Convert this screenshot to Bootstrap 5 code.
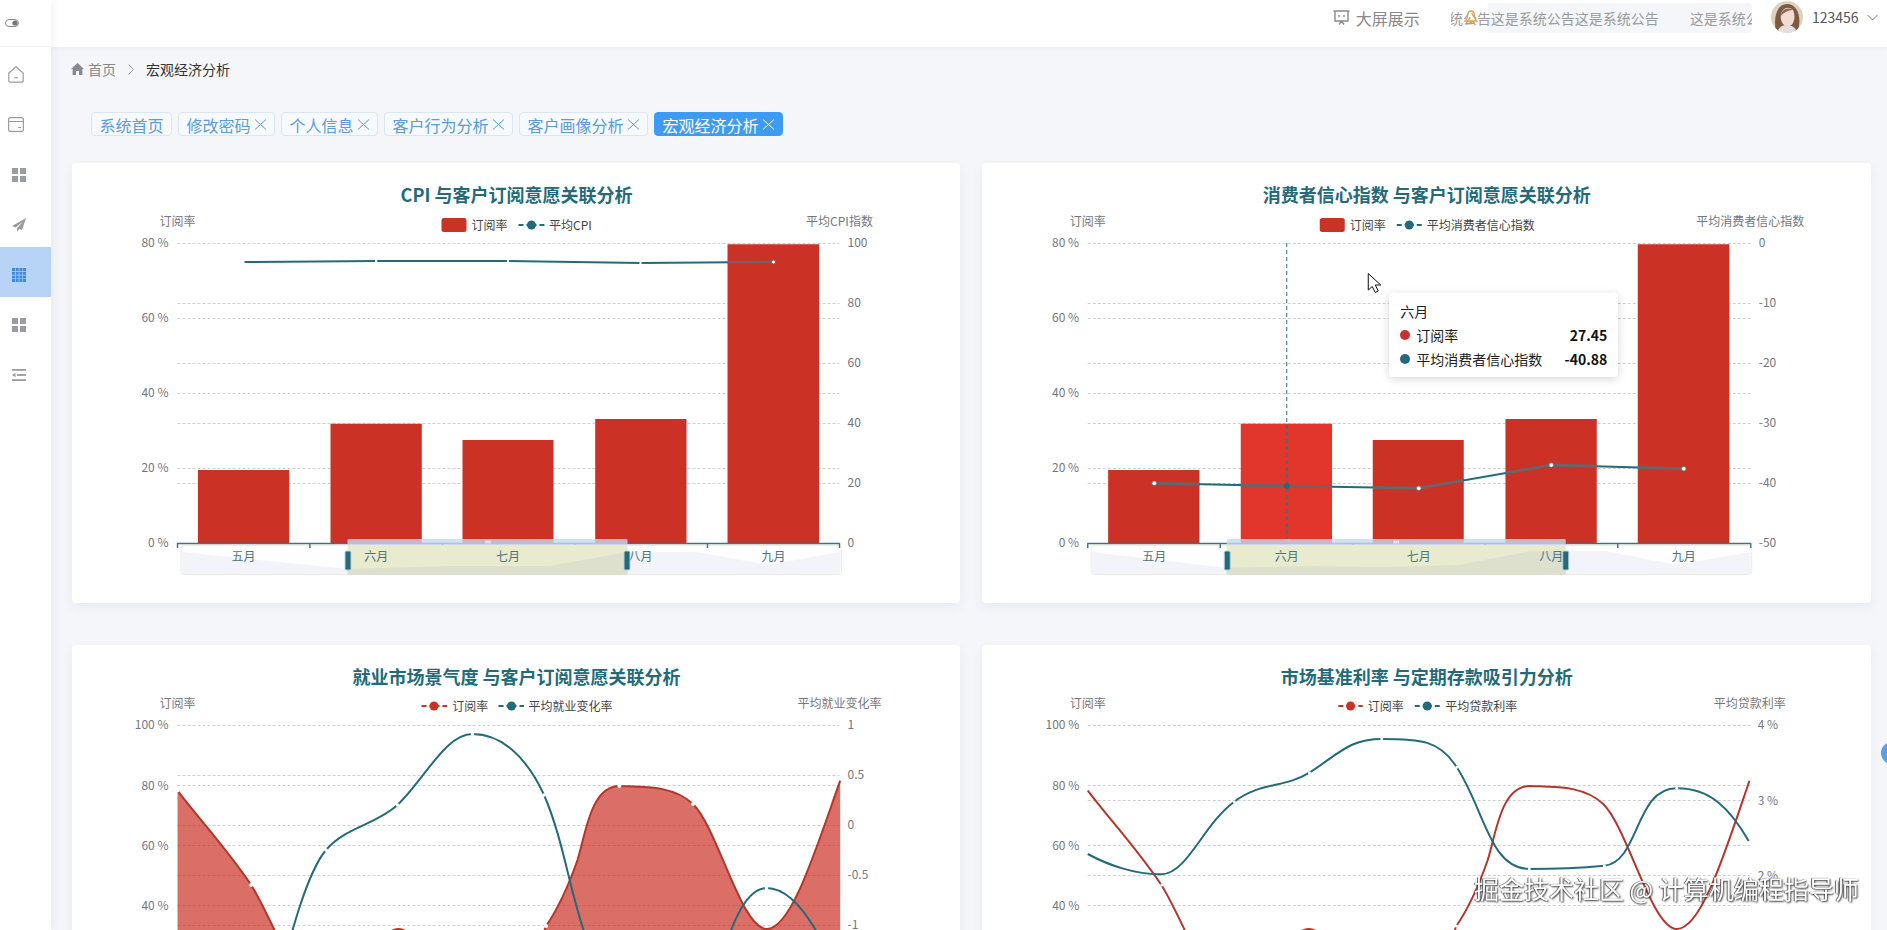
<!DOCTYPE html>
<html lang="zh-CN">
<head>
<meta charset="utf-8">
<title>宏观经济分析</title>
<link href="https://cdn.jsdelivr.net/npm/bootstrap@5.3.0/dist/css/bootstrap.min.css" rel="stylesheet">
<style>
html,body{height:930px;overflow:hidden}
body{background:#f4f6fa;font-family:"Noto Sans CJK SC","Noto Sans",sans-serif;font-size:14px;color:#333}
.shell{height:930px}
.side{width:51px;flex:none;background:#fff;box-shadow:2px 0 8px rgba(30,50,90,.06);z-index:2}
.side-top{height:47px;border-bottom:1px solid #f1f2f4;padding-left:5px}
.mi{height:50px;padding-left:12px;padding-top:5px;color:#9a9ca1}
.mi-wide{padding-left:8px}
.mi-on{background:#b7d3f5;color:#3d8be0}
.topbar{height:47px;background:#fff;box-shadow:0 1px 6px rgba(30,50,90,.05);padding-right:9.500px;color:#888}
.screen-link{font-size:16px;line-height:22px;color:#888;margin-right:31px;margin-top:-12px;gap:6px}
.notice{width:301px;height:30px;overflow:hidden;margin-top:-11px;margin-right:19px;white-space:nowrap;font-size:14px;line-height:30px;color:#9a9a9a;background:linear-gradient(90deg,transparent 37px,#f4f6fa 37px);border-radius:4px;text-indent:-2px}
.notice-gap{display:inline-block;width:31px}
.bell-char{position:relative;display:inline-block;text-indent:0}
.bell-char svg{position:absolute;left:1px;top:7px}
.who{font-size:14px;color:#555;line-height:20px;margin-top:-13px}
.who svg.face{border-radius:50%;margin-right:9px}
.crumbs{height:46px;padding-left:20px;padding-bottom:2px;color:#888;line-height:20px}
.crumbs b{font-weight:400;color:#333}
.crumb-sep{margin:0 12px}
.tabrow{margin-top:19px;padding-left:40px;gap:6px}
.tabx{height:24px;padding:1px 7.500px 0;font-size:16px;line-height:22px;color:#5a9be0;background:#f6f9fe;border:1px solid #dbe6f3;border-radius:4px;white-space:nowrap}
.tabx svg{margin-left:3px;flex:none}
.tabx-on{background:#3d9bf5;border-color:#3d9bf5;color:#fff}
.panels{display:grid;grid-template-columns:1fr 1fr;column-gap:22px;row-gap:42px;margin-top:27px;padding-left:20.500px;padding-right:16px}
.panel{height:440px;border:0;border-radius:4px;box-shadow:0 4px 12px rgba(30,50,90,.06)}
.panel svg.plot{display:block;width:100%;height:440px}
.plot text{font-family:"Noto Sans CJK SC","Noto Sans",sans-serif;font-size:12px;dominant-baseline:central}
.plot .ttl{font-size:18px;font-weight:700;fill:#236b7a;text-anchor:middle}
.plot .ax{fill:#75777f}
.plot .lg{fill:#444}
.plot .cat{fill:#4f7480;text-anchor:middle}
.gr{stroke:#cfcfcf;stroke-width:1;stroke-dasharray:3 2}
.tip{position:absolute;left:407px;top:130px;width:229px;height:84px;background:#fff;border-radius:4px;box-shadow:0 2px 10px rgba(0,0,0,.16);padding:6px 11px 0 11px;font-size:14px;line-height:24px;color:#222}
.tip-dot{width:10px;height:10px;border-radius:50%;margin-right:6px;flex:none}
.dot-red{background:#c8322a}
.dot-teal{background:#236b7a}
.tip b{margin-left:auto;font-weight:700;color:#111}
.float-dot{position:fixed;right:-16px;top:742px;width:22px;height:22px;border-radius:50%;background:#5a9ee8}
.wm{position:fixed;left:1474px;top:870px;font-size:25px;line-height:36px;color:#fff;white-space:nowrap;text-shadow:1px 1px 2px #333,-1px 0 1px #555}
</style>
</head>
<body>
<div class="shell d-flex">
  <aside class="side">
    <div class="side-top d-flex align-items-center">
      <svg width="14" height="8" viewBox="0 0 14 8"><rect x=".5" y=".5" width="13" height="7" rx="3.5" fill="none" stroke="#8a8a8a"/><circle cx="10" cy="4" r="2.6" fill="#777"/></svg>
    </div>
    <nav>
      <div class="mi mi-wide d-flex align-items-center"><svg width="16" height="17" viewBox="0 0 16 17" fill="none" stroke="#9a9ca1" stroke-width="1.2"><path d="M.8 7 8 .8 15.2 7v7.8a1.4 1.4 0 0 1-1.4 1.4H2.2A1.4 1.4 0 0 1 .8 14.800Z"/><path d="M6.200 11.800h3.600"/></svg></div>
      <div class="mi mi-wide d-flex align-items-center"><svg width="16" height="15" viewBox="0 0 16 15" fill="none" stroke="#9a9ca1" stroke-width="1.2"><rect x=".6" y=".6" width="14.800" height="13.800" rx="1.500"/><path d="M.6 4.500h14.800M10 10.500h3"/></svg></div>
      <div class="mi d-flex align-items-center"><svg width="14" height="14" viewBox="0 0 14 14" fill="#9a9ca1"><rect width="6" height="6"/><rect x="8" width="6" height="6"/><rect y="8" width="6" height="6"/><rect x="8" y="8" width="6" height="6"/></svg></div>
      <div class="mi d-flex align-items-center"><svg width="14" height="14" viewBox="0 0 14 14" fill="#9a9ca1"><path d="M14 0 0 8l3.500 1.500L11 3.500 5 10.300V14l2.300-3L10 12.300Z"/></svg></div>
      <div class="mi mi-on d-flex align-items-center"><svg width="14" height="14" viewBox="0 0 14 14" fill="#3d8be0"><path d="M0 0h3v3H0zM3.700 0h3v3h-3zM7.400 0h3v3h-3zM11 0h3v3h-3zM0 3.700h3v3H0zM3.700 3.700h3v3h-3zM7.400 3.700h3v3h-3zM11 3.700h3v3h-3zM0 7.400h3v3H0zM3.700 7.400h3v3h-3zM7.400 7.400h3v3h-3zM11 7.400h3v3h-3zM0 11h3v3H0zM3.700 11h3v3h-3zM7.400 11h3v3h-3zM11 11h3v3h-3z"/></svg></div>
      <div class="mi d-flex align-items-center"><svg width="14" height="14" viewBox="0 0 14 14" fill="#9a9ca1"><rect width="6" height="6"/><rect x="8" width="6" height="6"/><rect y="8" width="6" height="6"/><rect x="8" y="8" width="6" height="6"/></svg></div>
      <div class="mi d-flex align-items-center"><svg width="14" height="12" viewBox="0 0 14 12" fill="#9a9ca1"><rect width="14" height="1.800"/><rect x="5" y="5.100" width="9" height="1.800"/><rect y="10.200" width="14" height="1.800"/><path d="M3.500 3.800v4.400L0 6Z"/></svg></div>
    </nav>
  </aside>
  <div class="flex-grow-1 min-w-0">
    <header class="topbar d-flex align-items-center justify-content-end">
      <div class="screen-link d-flex align-items-center">
        <svg width="17" height="16" viewBox="0 0 17 16" fill="none" stroke="#8a8a8a" stroke-width="1.400"><path d="M.5 1h16M2 1v10h13V1M6 14.500l2.500-3.500 2.500 3.500M6 5v2M11 5v2"/></svg>
        <span>大屏展示</span>
      </div>
      <div class="notice">统<span class="bell-char">公<svg width="14" height="14" viewBox="0 0 14 14" fill="none" stroke="#e8a33c" stroke-width="1.300"><path d="M7 1C4.800 1 3.700 3 3.500 5.500 3.300 8 2.500 10 1 11h12c-1.500-1-2.300-3-2.500-5.500C10.300 3 9.200 1 7 1ZM5.500 12.500h3"/></svg></span>告这是系统公告这是系统公告<span class="notice-gap"></span>这是系统公告</div>
      <div class="who d-flex align-items-center">
        <svg class="face" width="32" height="32" viewBox="0 0 32 32"><rect width="32" height="32" fill="#ddd2bf"/><path d="M5 30C2 17 6 3 16 3s15 12 11 27Z" fill="#7d5a42"/><path d="M12 9c-3 4-3 10 0 14 3 3 8 3 10-1 2-4 2-9 0-13-3-3-7-3-10 0Z" fill="#f2dbd0"/><path d="M10 15c0-6 6-10 13-6-4 0-9 1-13 6Z" fill="#8f6a4e"/><path d="M6 32c1-6 6-8 10-8s9 2 10 8Z" fill="#e9dcdc"/></svg>
        <span>123456</span>
        <svg class="ms-2" width="11" height="7" viewBox="0 0 11 7" fill="none" stroke="#777"><path d="M.5 1 5.500 6l5-5"/></svg>
      </div>
    </header>
    <div class="crumbs d-flex align-items-center">
      <svg width="13" height="12" viewBox="0 0 13 12" fill="#858a94" class="me-1"><path d="M6.500 0 13 6h-1.600v6H8V8H5v4H1.600V6H0Z"/></svg>
      <span>首页</span>
      <svg class="crumb-sep" width="6" height="11" viewBox="0 0 6 11" fill="none" stroke="#999"><path d="m.5.5 5 5-5 5"/></svg>
      <b>宏观经济分析</b>
    </div>
    <div class="tabrow d-flex">
      <div class="tabx d-flex align-items-center">系统首页</div>
      <div class="tabx d-flex align-items-center">修改密码<svg width="13" height="11" viewBox="0 0 13 11" fill="none" stroke="currentColor"><path d="m1 .5 11 10M12 .5l-11 10"/></svg></div>
      <div class="tabx d-flex align-items-center">个人信息<svg width="13" height="11" viewBox="0 0 13 11" fill="none" stroke="currentColor"><path d="m1 .5 11 10M12 .5l-11 10"/></svg></div>
      <div class="tabx d-flex align-items-center">客户行为分析<svg width="13" height="11" viewBox="0 0 13 11" fill="none" stroke="currentColor"><path d="m1 .5 11 10M12 .5l-11 10"/></svg></div>
      <div class="tabx d-flex align-items-center">客户画像分析<svg width="13" height="11" viewBox="0 0 13 11" fill="none" stroke="currentColor"><path d="m1 .5 11 10M12 .5l-11 10"/></svg></div>
      <div class="tabx tabx-on d-flex align-items-center">宏观经济分析<svg width="13" height="11" viewBox="0 0 13 11" fill="none" stroke="currentColor"><path d="m1 .5 11 10M12 .5l-11 10"/></svg></div>
    </div>
    <div class="panels">

      <div class="card panel">
        <svg class="plot" viewBox="71.500 163 888.750 440">
          <defs><clipPath id="b1"><path d="M197.400 470h91.300v73h-91.300zM330 423.700h91.300V543H330zM462 440h91v103h-91zM594.700 419H686v124h-91.300zM727 244.300h91.600V543H727z"/></clipPath></defs>
          <text class="ttl" x="516" y="194">CPI 与客户订阅意愿关联分析</text>
          <text class="ax" x="177" y="220" text-anchor="middle">订阅率</text>
          <text class="ax" x="839" y="220" text-anchor="middle">平均CPI指数</text>
          <rect x="441" y="218" width="25" height="14" rx="2.500" fill="#cc3126"/>
          <text class="lg" x="471" y="224">订阅率</text>
          <path d="M518 225h26" stroke="#236b7a" stroke-width="2" stroke-dasharray="5 3 10 3 5"/><circle cx="531" cy="225" r="4.500" fill="#236b7a"/>
          <text class="lg" x="548.500" y="224">平均CPI</text>
          <path class="gr" d="M177 243.500h662M177 318.500h662M177 393.500h662M177 468.500h662M177 303.500h662M177 363.500h662M177 423.500h662M177 483.500h662"/>
          <text class="ax" x="168" y="241.700" text-anchor="end">80 %</text>
          <text class="ax" x="168" y="316.700" text-anchor="end">60 %</text>
          <text class="ax" x="168" y="391.700" text-anchor="end">40 %</text>
          <text class="ax" x="168" y="466.700" text-anchor="end">20 %</text>
          <text class="ax" x="168" y="541.700" text-anchor="end">0 %</text>
          <text class="ax" x="847" y="241.700">100</text>
          <text class="ax" x="847" y="301.700">80</text>
          <text class="ax" x="847" y="361.700">60</text>
          <text class="ax" x="847" y="421.700">40</text>
          <text class="ax" x="847" y="481.700">20</text>
          <text class="ax" x="847" y="541.700">0</text>
          <path d="M197.400 470h91.300v73h-91.300zM330 423.700h91.300V543H330zM462 440h91v103h-91zM594.700 419H686v124h-91.300zM727 244.300h91.600V543H727z" fill="#cc3126"/>
          <path d="M243 262 375.700 261 507.500 261 640 263 773 262" fill="none" stroke="#236b7a" stroke-width="2"/>
          <path d="M243 262 375.700 261 507.500 261 640 263 773 262" fill="none" stroke="#6d6468" stroke-width="2.500" clip-path="url(#b1)"/>
          <g fill="#fff"><circle cx="243" cy="262" r="1.200"/><circle cx="375.700" cy="261" r="1.200"/><circle cx="507.500" cy="261" r="1.200"/><circle cx="640" cy="263" r="1.200"/><circle cx="773" cy="262" r="2" stroke="#6d6468"/></g>
          <rect x="180.500" y="545.500" width="660.500" height="29" rx="3" fill="#fefefe" stroke="#ebeedf"/>
          <path d="M181 552 347 569v5H181ZM627 552h69l71 13 73-13v22H627Z" fill="#f2f4fa"/>
          <path d="M177 543.500h662M177 543v5M309.400 543v5M442 543v5M574.500 543v5M707 543v5M839 543v5" stroke="#3c7480" stroke-width="1.400" fill="none"/>
          <rect x="347" y="545" width="280" height="30" fill="#e9ebcf"/>
          <path d="M347 569 450 566h99l78-14v23H347Z" fill="#dde0cc"/>
          <text class="cat" x="243" y="555">五月</text><text class="cat" x="375.700" y="555">六月</text><text class="cat" x="507.500" y="555">七月</text><text class="cat" x="640" y="555">八月</text><text class="cat" x="773" y="555">九月</text>
          <rect x="347" y="539" width="280" height="6" rx="1" fill="#c8d8ee" fill-opacity=".8"/>
          <path d="M485.500 540.500v3M487.500 540.500v3M489.500 540.500v3" stroke="#fff"/>
          <rect x="344.500" y="551" width="6" height="19" rx="1.500" fill="#236b7a" stroke="#b8cfe4"/>
          <rect x="623.500" y="551" width="6" height="19" rx="1.500" fill="#236b7a" stroke="#b8cfe4"/>
        </svg>
      </div>

      <div class="card panel position-relative">
        <svg class="plot" viewBox="982.250 163 888.750 440">
          <defs><clipPath id="b2"><path d="M1108.400 470h91.300v73h-91.300zM1241 423.700h91.300V543H1241zM1373 440h91v103h-91zM1505.700 419h91.300v124h-91.300zM1638 244.300h91.600V543H1638z"/></clipPath></defs>
          <text class="ttl" x="1427" y="194">消费者信心指数 与客户订阅意愿关联分析</text>
          <text class="ax" x="1088" y="220" text-anchor="middle">订阅率</text>
          <text class="ax" x="1750.500" y="220" text-anchor="middle">平均消费者信心指数</text>
          <rect x="1320" y="218" width="25" height="14" rx="2.500" fill="#cc3126"/>
          <text class="lg" x="1350" y="224">订阅率</text>
          <path d="M1397 225h25" stroke="#236b7a" stroke-width="2" stroke-dasharray="5 3 9 3 5"/><circle cx="1409.500" cy="225" r="4.500" fill="#236b7a"/>
          <text class="lg" x="1427" y="224">平均消费者信心指数</text>
          <path class="gr" d="M1088 243.500h663M1088 318.500h663M1088 393.500h663M1088 468.500h663M1088 303.500h663M1088 363.500h663M1088 423.500h663M1088 483.500h663"/>
          <text class="ax" x="1079.300" y="241.700" text-anchor="end">80 %</text>
          <text class="ax" x="1079.300" y="316.700" text-anchor="end">60 %</text>
          <text class="ax" x="1079.300" y="391.700" text-anchor="end">40 %</text>
          <text class="ax" x="1079.300" y="466.700" text-anchor="end">20 %</text>
          <text class="ax" x="1079.300" y="541.700" text-anchor="end">0 %</text>
          <text class="ax" x="1759" y="241.700">0</text>
          <text class="ax" x="1759" y="301.700">-10</text>
          <text class="ax" x="1759" y="361.700">-20</text>
          <text class="ax" x="1759" y="421.700">-30</text>
          <text class="ax" x="1759" y="481.700">-40</text>
          <text class="ax" x="1759" y="541.700">-50</text>
          <path d="M1108.400 470h91.300v73h-91.300zM1373 440h91v103h-91zM1505.700 419h91.300v124h-91.300zM1638 244.300h91.600V543H1638z" fill="#cc3126"/>
          <rect x="1241" y="423.700" width="91.300" height="119.300" fill="#e2352c"/>
          <path d="M1287 243v300" stroke="#2d6f7e" stroke-dasharray="4 3"/>
          <path d="M1154.500 483.300 1287 486 1419 488.300 1551.500 465 1684 468.700" fill="none" stroke="#236b7a" stroke-width="2"/>
          <path d="M1154.500 483.300 1287 486 1419 488.300 1551.500 465 1684 468.700" fill="none" stroke="#6d6468" stroke-width="3" clip-path="url(#b2)"/>
          <g fill="#fff" stroke="#6d6468" stroke-width=".7"><circle cx="1154.500" cy="483.300" r="2.300"/><circle cx="1419" cy="488.300" r="2.300"/><circle cx="1551.500" cy="465" r="2.300"/><circle cx="1684" cy="468.700" r="2.300"/></g>
          <circle cx="1287" cy="486" r="3" fill="#236b7a"/>
          <rect x="1091.500" y="545.500" width="660.500" height="29" rx="3" fill="#fefefe" stroke="#ebeedf"/>
          <path d="M1092 552 1227 568v6H1092ZM1566 551h40l71 14 74-13v22H1566Z" fill="#f2f4fa"/>
          <path d="M1088 543.500h663M1088 543v5M1220.500 543v5M1353.500 543v5M1485.500 543v5M1618 543v5M1751 543v5" stroke="#3c7480" stroke-width="1.400" fill="none"/>
          <rect x="1227" y="545" width="339" height="30" fill="#e9ebcf"/>
          <path d="M1227 568 1307 566l75 1 77-2 72-14h35v24h-339Z" fill="#dde0cc"/>
          <text class="cat" x="1154.500" y="555">五月</text><text class="cat" x="1287" y="555">六月</text><text class="cat" x="1419" y="555">七月</text><text class="cat" x="1551.500" y="555">八月</text><text class="cat" x="1684" y="555">九月</text>
          <rect x="1227" y="539" width="339" height="6" rx="1" fill="#c8d8ee" fill-opacity=".8"/>
          <path d="M1394.500 540.500v3M1396.500 540.500v3M1398.500 540.500v3" stroke="#fff"/>
          <rect x="1224.500" y="551" width="6" height="19" rx="1.500" fill="#236b7a" stroke="#b8cfe4"/>
          <rect x="1563" y="551" width="6" height="19" rx="1.500" fill="#236b7a" stroke="#b8cfe4"/>
          <path d="M1368.500 273.500V290l4-3.500 3 6 3-1.500-3-6h5.500Z" fill="#fff" stroke="#111"/>
        </svg>
        <div class="tip">
          <div>六月</div>
          <div class="d-flex align-items-center"><span class="tip-dot dot-red"></span><span>订阅率</span><b>27.45</b></div>
          <div class="d-flex align-items-center"><span class="tip-dot dot-teal"></span><span>平均消费者信心指数</span><b>-40.88</b></div>
        </div>
      </div>

      <div class="card panel">
        <svg class="plot" viewBox="71.500 645 888.750 440">
          <text class="ttl" x="516" y="676">就业市场景气度 与客户订阅意愿关联分析</text>
          <text class="ax" x="177" y="702" text-anchor="middle">订阅率</text>
          <text class="ax" x="839" y="702" text-anchor="middle">平均就业变化率</text>
          <path d="M421 706h25.600" stroke="#cc3126" stroke-width="2" stroke-dasharray="5 3 10 3 5"/><circle cx="433.500" cy="706" r="4.500" fill="#cc3126"/>
          <text class="lg" x="451.700" y="705">订阅率</text>
          <path d="M498 706h25.500" stroke="#236b7a" stroke-width="2" stroke-dasharray="5 3 10 3 5"/><circle cx="511" cy="706" r="4.500" fill="#236b7a"/>
          <text class="lg" x="528" y="705">平均就业变化率</text>
          <path class="gr" d="M177 725.500h662M177 785.500h662M177 845.500h662M177 905.500h662M177 775.500h662M177 825.500h662M177 875.500h662M177 925.500h662"/>
          <text class="ax" x="168" y="723.300" text-anchor="end">100 %</text>
          <text class="ax" x="168" y="784" text-anchor="end">80 %</text>
          <text class="ax" x="168" y="844" text-anchor="end">60 %</text>
          <text class="ax" x="168" y="904" text-anchor="end">40 %</text>
          <text class="ax" x="847" y="723.300">1</text>
          <text class="ax" x="847" y="773.300">0.5</text>
          <text class="ax" x="847" y="823.300">0</text>
          <text class="ax" x="847" y="873.300">-0.5</text>
          <text class="ax" x="847" y="923.300">-1</text>
          <path d="M177 790.700C201 822 226 848.500 250.600 885 272 918 305 1010 324 1010 349 1010 373 929 398 929 423 929 447 1010 471.600 1010 496 1010 530 970 545.600 926 560 905 570 880 577 860 585 835 590 786 618.900 786 643 787 672 785 692.500 804 717 828 741 929 766 929 791 929 815 850 839.700 780.700V1030H177Z" fill="#cc3126" fill-opacity=".7" stroke="none"/>
          <path d="M177 790.700C201 822 226 848.500 250.600 885 272 918 305 1010 324 1010 349 1010 373 929 398 929 423 929 447 1010 471.600 1010 496 1010 530 970 545.600 926 560 905 570 880 577 860 585 835 590 786 618.900 786 643 787 672 785 692.500 804 717 828 741 929 766 929 791 929 815 850 839.700 780.700" fill="none" stroke="#b5352b" stroke-width="2"/>
          <path d="M262 1040C280 980 300 880 325.500 850 345 827 375 825 397 805 425 778 445 734 472 734 500 734 525 755 543.600 795 565 845 570 900 590 950 600 1000 610 1040 620 1060M718 985C725 930 745 888 766 888 790 888 815 920 839 980" fill="none" stroke="#236b7a" stroke-width="2"/>
          <g fill="#fff"><circle cx="177" cy="790.700" r="1.800"/><circle cx="250.600" cy="885" r="2"/><circle cx="545.600" cy="926" r="2"/><circle cx="618.900" cy="786" r="2"/><circle cx="692.500" cy="804" r="2"/><circle cx="325.500" cy="850" r="1.800"/><circle cx="397" cy="805" r="1.800"/><circle cx="472" cy="734" r="1.800"/><circle cx="543.600" cy="795" r="1.800"/><circle cx="766" cy="888" r="1.800"/></g>
        </svg>
      </div>

      <div class="card panel">
        <svg class="plot" viewBox="982.250 645 888.750 440">
          <text class="ttl" x="1427" y="676">市场基准利率 与定期存款吸引力分析</text>
          <text class="ax" x="1088" y="702" text-anchor="middle">订阅率</text>
          <text class="ax" x="1750" y="702" text-anchor="middle">平均贷款利率</text>
          <path d="M1338.600 706h24.400" stroke="#cc3126" stroke-width="2" stroke-dasharray="5 3 9 3 5"/><circle cx="1350.800" cy="706" r="4.500" fill="#cc3126"/>
          <text class="lg" x="1368" y="705">订阅率</text>
          <path d="M1415 706h25" stroke="#236b7a" stroke-width="2" stroke-dasharray="5 3 9 3 5"/><circle cx="1427.500" cy="706" r="4.500" fill="#236b7a"/>
          <text class="lg" x="1445.600" y="705">平均贷款利率</text>
          <path class="gr" d="M1088 725.500h662M1088 785.500h662M1088 845.500h662M1088 905.500h662M1088 800.500h662M1088 875.500h662"/>
          <text class="ax" x="1079.500" y="723.300" text-anchor="end">100 %</text>
          <text class="ax" x="1079.500" y="784" text-anchor="end">80 %</text>
          <text class="ax" x="1079.500" y="844" text-anchor="end">60 %</text>
          <text class="ax" x="1079.500" y="904" text-anchor="end">40 %</text>
          <text class="ax" x="1758" y="723.300">4 %</text>
          <text class="ax" x="1758" y="799">3 %</text>
          <text class="ax" x="1758" y="874">2 %</text>
          <path transform="translate(911 0)" d="M177 790.700C201 822 226 848.500 250.600 885 272 918 305 1010 324 1010 349 1010 373 929 398 929 423 929 447 1010 471.600 1010 496 1010 530 970 545.600 926 560 905 570 880 577 860 585 835 590 786 618.900 786 643 787 672 785 692.500 804 717 828 741 929 766 929 791 929 815 850 838.700 780.700" fill="none" stroke="#b5352b" stroke-width="2"/>
          <path d="M1088 854C1110 866 1138 875 1162 874.300 1188 873 1203 825 1234.500 801.700 1260 782 1285 788 1309.700 772.700 1340 753 1350 739 1382 739 1420 739 1440 740 1457 767.300 1485 810 1490 869 1529.500 869 1555 869 1580 868 1604.600 865.700 1640 862 1635 788 1677 788.300 1710 788 1730 808 1749 841" fill="none" stroke="#236b7a" stroke-width="2"/>
          <g fill="#fff"><circle cx="1234.500" cy="801.700" r="1.500"/><circle cx="1309.700" cy="772.700" r="1.500"/><circle cx="1382" cy="739" r="1.500"/><circle cx="1457" cy="767.300" r="1.500"/><circle cx="1529.500" cy="869" r="1.500"/><circle cx="1604.600" cy="865.700" r="1.500"/><circle cx="1677" cy="788.300" r="1.500"/><circle cx="1162" cy="885" r="1.500"/><circle cx="1456.600" cy="926" r="1.500"/></g>
        </svg>
      </div>
    </div>
  </div>
</div>
<div class="float-dot"></div>
<div class="wm">掘金技术社区 @ 计算机编程指导师</div>
<script src="https://cdn.jsdelivr.net/npm/bootstrap@5.3.0/dist/js/bootstrap.bundle.min.js"></script>
</body>
</html>
